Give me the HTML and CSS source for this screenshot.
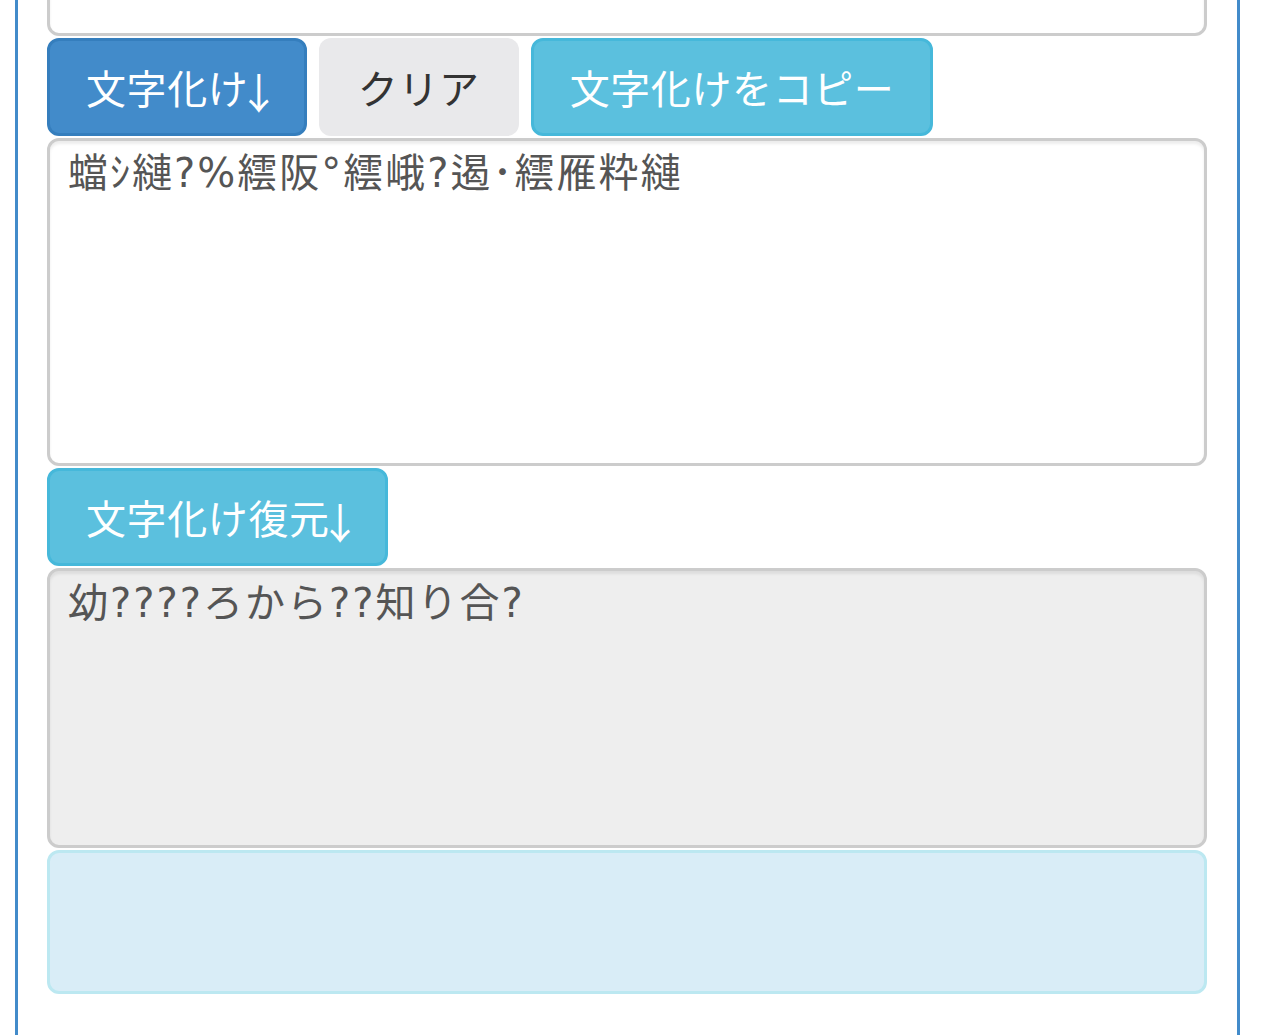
FILE: index.html
```html
<!DOCTYPE html>
<html lang="ja">
<head>
<meta charset="utf-8">
<title>文字化け</title>
<link rel="stylesheet" href="styles.css">
</head>
<body>
<div class="panel">
  <textarea class="field field-source"></textarea>
  <div class="btn-row">
    <button class="btn btn-primary btn-arrow">文字化<span class="tight">け</span><span class="arrow">↓</span></button>
    <button class="btn btn-default">クリア</button>
    <button class="btn btn-info">文字化けをコピー</button>
  </div>
  <textarea class="field field-garbled">蟷ｼ縺?%繧阪°繧峨?遏･繧雁粋縺</textarea>
  <div class="btn-row">
    <button class="btn btn-info btn-arrow">文字化け復<span class="tight">元</span><span class="arrow">↓</span></button>
  </div>
  <textarea class="field field-restored" readonly>幼????ろから??知り合?</textarea>
  <div class="alert-info"></div>
</div>
</body>
</html>
```

FILE: styles.css
```css
* { box-sizing: border-box; }

html, body {
  margin: 0;
  padding: 0;
  background: #fff;
  overflow: hidden;
}

body {
  font-family: "Noto Sans CJK JP", "Noto Sans", sans-serif;
  color: #333;
}

.panel {
  margin: -120px 0 0 15px;
  width: 1225px;
  border: 3px solid #428bca;
  padding: 0 30px 80px 29px;
  display: flex;
  flex-direction: column;
  gap: 2px;
}

.field {
  display: block;
  width: 100%;
  border: 3px solid #ccc;
  border-radius: 12px;
  background: #fff;
  box-shadow: inset 0 3px 3px rgba(0, 0, 0, 0.075);
  font-family: "DejaVu Sans", "Noto Sans CJK JP", sans-serif;
  font-size: 40px;
  line-height: 54px;
  letter-spacing: 2px;
  color: #555;
  padding: 5px 18px;
  resize: none;
  outline: none;
  margin: 0;
}

.field-source { height: 153px; }
.field-garbled { height: 328px; }
.field-restored { height: 280px; background: #eee; }

.btn-row {
  display: flex;
  gap: 12px;
}

.btn {
  height: 98px;
  border: 3px solid transparent;
  border-radius: 12px;
  padding: 0 36px;
  font-family: "Noto Sans CJK JP", "Noto Sans", sans-serif;
  font-size: 40px;
  line-height: 1;
  letter-spacing: 0.6px;
  color: #fff;
  display: flex;
  align-items: center;
  margin: 0;
  white-space: nowrap;
}

.btn-arrow {
  padding-right: 24px;
}

.tight {
  letter-spacing: -10px;
}

.arrow {
  font-family: "Noto Sans CJK JP", sans-serif;
  font-size: 42px;
  position: relative;
  top: 4px;
  letter-spacing: 0;
}

.btn-primary {
  background: #428bca;
  border-color: #357ebd;
}

.btn-default {
  background: #e9e9eb;
  color: #333;
  padding: 0 36px;
}

.btn-info {
  background: #5bc0de;
  border-color: #46b8da;
}

.alert-info {
  height: 144px;
  background: #d9edf7;
  border: 3px solid #bce8f1;
  border-radius: 12px;
}
```
